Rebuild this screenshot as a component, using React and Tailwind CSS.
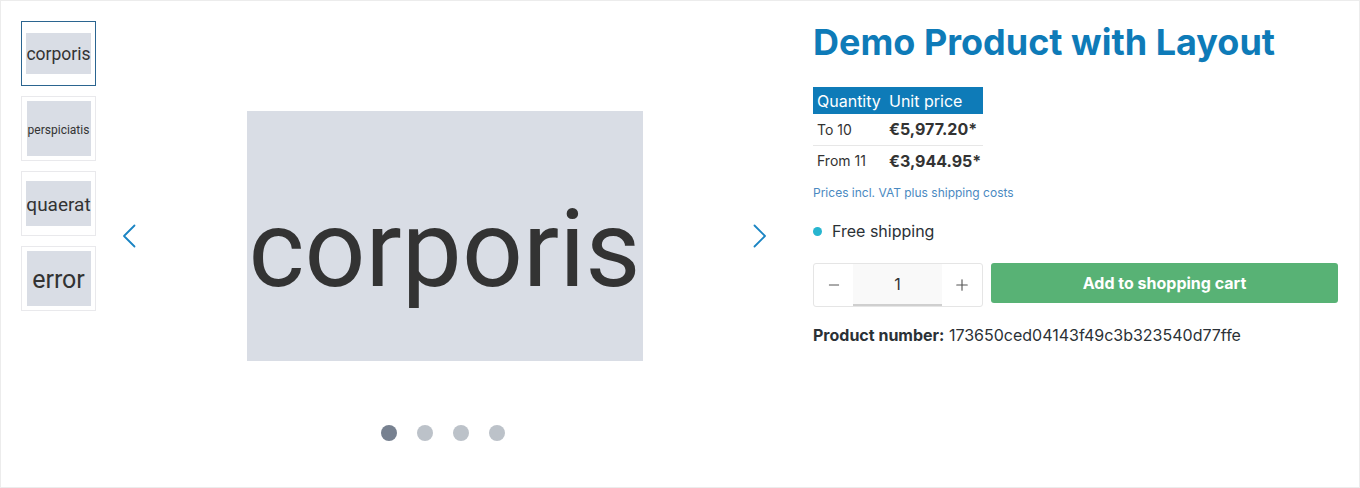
import { Minus, Plus } from 'lucide-react'

const THUMBS = [
  { label: 'corporis', w: 'w-[65px] h-[41px]', text: 'text-[17.5px]', active: true },
  { label: 'perspiciatis', w: 'w-[64px] h-[55px]', text: 'text-[12px]' },
  { label: 'quaerat', w: 'w-[65px] h-[45px]', text: 'text-[19px]' },
  { label: 'error', w: 'w-[64px] h-[55px]', text: 'text-[25px]' },
]

const PRICES = [
  { qty: 'To 10', price: '€5,977.20*' },
  { qty: 'From 11', price: '€3,944.95*' },
]

function Thumb({ t }) {
  return (
    <div
      className={`w-[75px] h-[65px] p-[4px] flex items-center justify-center bg-white border ${
        t.active ? 'border-[#2b6590]' : 'border-[#e9e9ec]'
      }`}
    >
      <div className={`${t.w} bg-[#d9dde5] flex items-center justify-center overflow-hidden`}>
        <span className={`${t.text} text-[#333] leading-none font-['Roboto',sans-serif] mt-[2px]`}>{t.label}</span>
      </div>
    </div>
  )
}

function Chevron({ dir }) {
  return (
    <svg width="14" height="24" viewBox="0 0 14 24" fill="none" stroke="currentColor" strokeWidth="1.8" strokeLinecap="round" strokeLinejoin="round">
      {dir === 'left' ? <path d="M12.5 1.5 2 12l10.5 10.5" /> : <path d="M1.5 1.5 12 12 1.5 22.5" />}
    </svg>
  )
}

export default function App() {
  return (
    <div className="w-[1360px] h-[488px] bg-white border border-[#ececec] flex pt-[20px] pl-[20px] pr-[21px] font-['Inter',sans-serif] text-[#2b3136]">
      {/* thumbnails */}
      <div className="w-[75px] flex flex-col gap-[10px] shrink-0">
        {THUMBS.map(t => <Thumb key={t.label} t={t} />)}
      </div>

      {/* main slider */}
      <div className="flex-1 flex flex-col mr-[20px]">
        <div className="mt-[90px] h-[250px] flex items-center px-[13px]">
          <button className="w-[40px] h-[40px] flex items-center justify-center text-[#1a84c3]">
            <Chevron dir="left" />
          </button>
          <div className="flex-1 flex justify-center">
            <div className="w-[396px] h-[250px] bg-[#d9dde5] flex items-center justify-center">
              <span className="text-[107px] leading-none text-[#333] font-['Roboto',sans-serif] mt-[26px]">corporis</span>
            </div>
          </div>
          <button className="w-[40px] h-[40px] flex items-center justify-center text-[#1a84c3]">
            <Chevron dir="right" />
          </button>
        </div>
        <div className="mt-[64px] flex justify-center gap-[20px] pr-[3px]">
          <span className="w-[16px] h-[16px] rounded-full bg-[#778190]" />
          <span className="w-[16px] h-[16px] rounded-full bg-[#bcc2c9]" />
          <span className="w-[16px] h-[16px] rounded-full bg-[#bcc2c9]" />
          <span className="w-[16px] h-[16px] rounded-full bg-[#bcc2c9]" />
        </div>
      </div>

      {/* buy box */}
      <div className="w-[525px] shrink-0 flex flex-col">
        <h1 className="text-[36px] leading-[1.2] font-bold text-[#0e7bb8]">Demo Product with Layout</h1>

        <table className="mt-[23px] w-[170px] table-fixed border-collapse">
          <thead>
            <tr className="bg-[#0e7bb8] text-white text-[16px] h-[27px]">
              <th className="w-[72px] pl-[4px] text-left font-normal leading-none whitespace-nowrap">Quantity</th>
              <th className="pl-[4px] text-left font-normal leading-none whitespace-nowrap">Unit price</th>
            </tr>
          </thead>
          <tbody>
            {PRICES.map((p, i) => (
              <tr key={p.qty} className={`h-[31px] ${i === 0 ? 'border-b border-[#e7e7e7]' : ''}`}>
                <td className="pl-[4px] text-[14px] text-[#333] whitespace-nowrap">{p.qty}</td>
                <td className="pl-[4px] text-[16px] font-bold text-[#333] whitespace-nowrap">{p.price}</td>
              </tr>
            ))}
          </tbody>
        </table>

        <p className="mt-[8px] text-[12px] leading-[18px] text-[#4a89c1]">Prices incl. VAT plus shipping costs</p>

        <div className="mt-[17px] flex items-center gap-[10px] text-[16px] leading-[24px]">
          <span className="w-[9px] h-[9px] rounded-full bg-[#27b5cf]" />
          <span>Free shipping</span>
        </div>

        <div className="mt-[20px] flex items-start gap-[8px]">
          <div className="w-[170px] h-[44px] flex border border-[#e5e5e5] rounded-[3px]">
            <button className="w-[39px] flex items-center justify-center text-[#555]">
              <Minus size={16} strokeWidth={1.5} />
            </button>
            <div className="w-[89px] bg-[#f9f9f9] border-b-2 border-[#cfcfcf] flex items-center justify-center text-[16px] text-[#333]">1</div>
            <button className="flex-1 flex items-center justify-center text-[#555]">
              <Plus size={18} strokeWidth={1.5} />
            </button>
          </div>
          <button className="flex-1 h-[40px] rounded-[3px] bg-[#58b275] text-white text-[16px] font-bold">
            Add to shopping cart
          </button>
        </div>

        <p className="mt-[16px] text-[16px] leading-[24px]">
          <span className="font-bold">Product number:</span> 173650ced04143f49c3b323540d77ffe
        </p>
      </div>
    </div>
  )
}
